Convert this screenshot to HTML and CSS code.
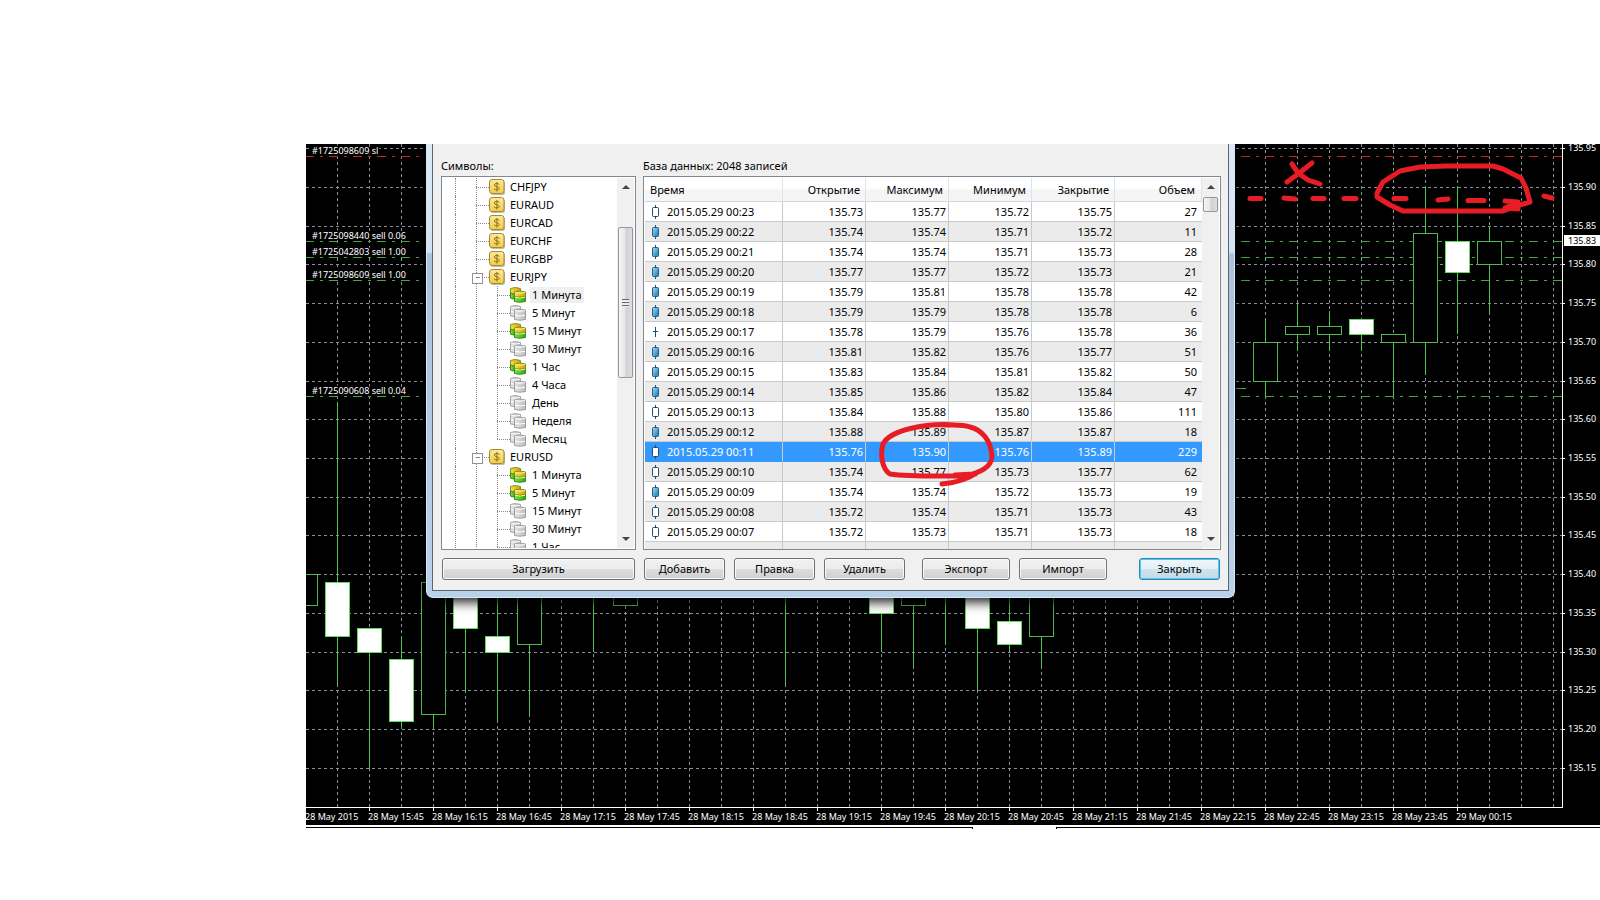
FILE: index.html
```html
<!DOCTYPE html>
<html lang="ru">
<head>
<meta charset="utf-8">
<title>История котировок</title>
<link rel="stylesheet" href="styles.css">
</head>
<body>
<svg class="defs" aria-hidden="true">
  <defs>
    <linearGradient id="gold" x1="0" y1="0" x2="0" y2="1"><stop offset="0" stop-color="#fbe9a0"/><stop offset="1" stop-color="#f3cc48"/></linearGradient>
    <linearGradient id="yel" x1="0" y1="0" x2="1" y2="0"><stop offset="0" stop-color="#f3e04a"/><stop offset="1" stop-color="#c9a400"/></linearGradient>
    <linearGradient id="grn" x1="0" y1="0" x2="1" y2="0"><stop offset="0" stop-color="#7be84a"/><stop offset="1" stop-color="#2fa80e"/></linearGradient>
    <linearGradient id="gry" x1="0" y1="0" x2="1" y2="0"><stop offset="0" stop-color="#e6e6e6"/><stop offset="1" stop-color="#bdbdbd"/></linearGradient>
    <linearGradient id="blu" x1="0" y1="0" x2="1" y2="1"><stop offset="0" stop-color="#a9dcf5"/><stop offset="1" stop-color="#1773b4"/></linearGradient>
    <symbol id="coin" viewBox="0 0 16 16">
      <rect x="1.5" y="2" width="14.500" height="14" rx="2.500" fill="#bbb"/>
      <rect x=".5" y=".5" width="14.500" height="14" rx="2.500" fill="url(#gold)" stroke="#a98a2a"/>
      <path d="M10.500 5.500C9.500 4 5.300 4 5.300 6S10.500 7.800 10.500 9.400 6 11.400 5 9.800M7.900 3v9.500" fill="none" stroke="#8f7312"/>
    </symbol>
    <symbol id="db-on" viewBox="0 0 16 16">
      <path d="M.5 1.500q4.500-2 10 0V11q-4.500 1.500-10 0z" fill="url(#yel)" stroke="#8c8a20"/>
      <path d="M.5 6q2 1 4.500 1v5q-3 0-4.500-1z" fill="url(#grn)" stroke="#3d8b20"/>
      <path d="M4.500 5q5-2 11 0V10h-11z" fill="url(#yel)" stroke="#8f8516"/>
      <path d="M4.500 10q5 1.500 11 0v4.500q-5 1.500-11 0z" fill="url(#grn)" stroke="#338a18"/>
      <path d="M5 5.500q5 1.500 10 0M5 10.300q5 1.500 10 0" fill="none" stroke="#f7f7a0"/>
    </symbol>
    <symbol id="db-off" viewBox="0 0 16 16">
      <path d="M.5 1.500q4.500-2 10 0V11q-4.500 1.500-10 0z" fill="url(#gry)" stroke="#a5a5a5"/>
      <path d="M1 6.200q2 1 4 1M1 2.500q4 1 9 0" fill="none" stroke="#fff"/>
      <path d="M4.500 5q5-2 11 0v9.500q-5 1.500-11 0z" fill="url(#gry)" stroke="#9d9d9d"/>
      <path d="M5 5.500q5 1.500 10 0M5 10.300q5 1.500 10 0" fill="none" stroke="#fff"/>
    </symbol>
    <symbol id="c-up" viewBox="0 0 8 14"><path d="M4.500 0v14" stroke="#1b4f6b"/><rect x="1.500" y="2.500" width="6" height="9" rx="1" fill="#fff" stroke="#1b4f6b"/></symbol>
    <symbol id="c-dn" viewBox="0 0 8 14"><path d="M4.500 0v14" stroke="#1b4f6b"/><rect x="1.500" y="2.500" width="6" height="9" rx="1" fill="url(#blu)" stroke="#1b5f8b"/></symbol>
    <symbol id="c-eq" viewBox="0 0 8 14"><path d="M4.500 2v10M2 6.500h5" stroke="#1b4f6b"/></symbol>
  </defs>
</svg>

<main class="stage">
  <svg class="chart" role="img" aria-label="EURJPY">
    <g transform="translate(-306 -144)">
      <path class="grid" d="M306 148.500H1562M306 187.500H1562M306 226.500H1562M306 264.500H1562M306 303.500H1562M306 342.500H1562M306 381.500H1562M306 419.500H1562M306 458.500H1562M306 497.500H1562M306 535.500H1562M306 574.500H1562M306 613.500H1562M306 652.500H1562M306 690.500H1562M306 729.500H1562M306 768.500H1562"/>
      <path class="grid" d="M337.500 144V807M369.500 144V807M401.500 144V807M433.500 144V807M465.500 144V807M497.500 144V807M529.500 144V807M561.500 144V807M593.500 144V807M625.500 144V807M657.500 144V807M689.500 144V807M721.500 144V807M753.500 144V807M785.500 144V807M817.500 144V807M849.500 144V807M881.500 144V807M913.500 144V807M945.500 144V807M977.500 144V807M1009.500 144V807M1041.500 144V807M1073.500 144V807M1105.500 144V807M1137.500 144V807M1169.500 144V807M1201.500 144V807M1233.500 144V807M1265.500 144V807M1297.500 144V807M1329.500 144V807M1361.500 144V807M1393.500 144V807M1425.500 144V807M1457.500 144V807M1489.500 144V807M1521.500 144V807M1553.500 144V807"/>
      <path class="order stop" d="M305 156.500H419M1241 156.500H1562"/>
      <path class="order" d="M305 241.500H419M305 257.500H419M305 280.500H419M305 396.500H419M1241 241.500H1562M1241 257.500H1562M1241 280.500H1562M1241 396.500H1562"/>
      <path class="wick" d="M1236 388.500H1246"/>
      <path class="wick" d="M337.500 402V684M369.500 628V770M401.500 636V729M433.500 714V729M465.500 590V692M497.500 590V722M529.500 644V716M593.500 590V652M785.500 590V684M881.500 590V652M913.500 605V668M945.500 590V644M977.500 590V691M1009.500 590V652M1041.500 636V668M1265.500 318V397M1297.500 303V350M1329.500 311V350M1361.500 319V350M1393.500 334V397M1425.500 187V374M1457.500 187V334M1489.500 227V312"/>
      <g class="bear">
        <path d="M293.500 574.500h24v31h-24zM421.500 582.500h24v132h-24zM517.500 582.500h24v62h-24zM613.500 582.500h24v23h-24zM901.500 582.500h24v23h-24zM1029.500 582.500h24v54h-24zM1253.500 342.500h24v39h-24zM1285.500 326.500h24v8h-24zM1317.500 326.500h24v8h-24zM1381.500 334.500h24v8h-24zM1413.500 233.500h24v109h-24zM1477.500 241.500h24v23h-24z"/>
      </g>
      <g class="bull">
        <path d="M325.500 582.500h24v54h-24zM357.500 628.500h24v24h-24zM389.500 659.500h24v62h-24zM453.500 582.500h24v46h-24zM485.500 636.500h24v16h-24zM869.500 582.500h24v31h-24zM965.500 582.500h24v46h-24zM997.500 621.500h24v23h-24zM1349.500 319.500h24v15h-24zM1445.500 241.500h24v31h-24z"/>
      </g>
      <path class="axis" d="M306 807.500H1562.500V144M369.500 807v4M433.500 807v4M497.500 807v4M561.500 807v4M625.500 807v4M689.500 807v4M753.500 807v4M817.500 807v4M881.500 807v4M945.500 807v4M1009.500 807v4M1073.500 807v4M1137.500 807v4M1201.500 807v4M1265.500 807v4M1329.500 807v4M1393.500 807v4M1457.500 807v4M1562 148.500h3M1562 187.500h3M1562 226.500h3M1562 264.500h3M1562 303.500h3M1562 342.500h3M1562 381.500h3M1562 419.500h3M1562 458.500h3M1562 497.500h3M1562 535.500h3M1562 574.500h3M1562 613.500h3M1562 652.500h3M1562 690.500h3M1562 729.500h3M1562 768.500h3"/>
      <g class="label boxed">
        <text x="312" y="154">#1725098609 sl</text>
        <text x="312" y="239">#1725098440 sell 0.06</text>
        <text x="312" y="255">#1725042803 sell 1.00</text>
        <text x="312" y="278">#1725098609 sell 1.00</text>
        <text x="312" y="394">#1725090608 sell 0.04</text>
      </g>
      <g class="label">
        <text x="1568" y="151">135.95</text><text x="1568" y="190">135.90</text><text x="1568" y="229">135.85</text><text x="1568" y="267">135.80</text><text x="1568" y="306">135.75</text><text x="1568" y="345">135.70</text><text x="1568" y="384">135.65</text><text x="1568" y="422">135.60</text><text x="1568" y="461">135.55</text><text x="1568" y="500">135.50</text><text x="1568" y="538">135.45</text><text x="1568" y="577">135.40</text><text x="1568" y="616">135.35</text><text x="1568" y="655">135.30</text><text x="1568" y="693">135.25</text><text x="1568" y="732">135.20</text><text x="1568" y="771">135.15</text>
        <rect x="1564" y="235" width="36" height="11" fill="#fff"/>
        <text class="current" x="1568" y="244">135.83</text>
      </g>
      <g class="label">
        <text x="305" y="820">28 May 2015</text><text x="368" y="820">28 May 15:45</text><text x="432" y="820">28 May 16:15</text><text x="496" y="820">28 May 16:45</text><text x="560" y="820">28 May 17:15</text><text x="624" y="820">28 May 17:45</text><text x="688" y="820">28 May 18:15</text><text x="752" y="820">28 May 18:45</text><text x="816" y="820">28 May 19:15</text><text x="880" y="820">28 May 19:45</text><text x="944" y="820">28 May 20:15</text><text x="1008" y="820">28 May 20:45</text><text x="1072" y="820">28 May 21:15</text><text x="1136" y="820">28 May 21:45</text><text x="1200" y="820">28 May 22:15</text><text x="1264" y="820">28 May 22:45</text><text x="1328" y="820">28 May 23:15</text><text x="1392" y="820">28 May 23:45</text><text x="1456" y="820">29 May 00:15</text>
      </g>
    </g>
  </svg>
  <div class="tabs"><span class="tab-edge first"></span><span class="tab-gap"></span><span class="tab-edge last"></span></div>

  <section class="dialog" role="dialog" aria-label="База данных">
    <div class="client">
      <div class="panes">
        <div class="pane">
          <h2 class="caption">Символы:</h2>
          <div class="box tree-box">
            <ul class="tree">
              <li class="sym"><svg class="icon"><use href="#coin"/></svg><span>CHFJPY</span></li>
              <li class="sym"><svg class="icon"><use href="#coin"/></svg><span>EURAUD</span></li>
              <li class="sym"><svg class="icon"><use href="#coin"/></svg><span>EURCAD</span></li>
              <li class="sym"><svg class="icon"><use href="#coin"/></svg><span>EURCHF</span></li>
              <li class="sym"><svg class="icon"><use href="#coin"/></svg><span>EURGBP</span></li>
              <li class="sym open"><svg class="icon"><use href="#coin"/></svg><span>EURJPY</span></li>
              <li>
                <ul class="frames">
                  <li><svg class="icon"><use href="#db-on"/></svg><span class="picked">1 Минута</span></li>
                  <li><svg class="icon"><use href="#db-off"/></svg><span>5 Минут</span></li>
                  <li><svg class="icon"><use href="#db-on"/></svg><span>15 Минут</span></li>
                  <li><svg class="icon"><use href="#db-off"/></svg><span>30 Минут</span></li>
                  <li><svg class="icon"><use href="#db-on"/></svg><span>1 Час</span></li>
                  <li><svg class="icon"><use href="#db-off"/></svg><span>4 Часа</span></li>
                  <li><svg class="icon"><use href="#db-off"/></svg><span>День</span></li>
                  <li><svg class="icon"><use href="#db-off"/></svg><span>Неделя</span></li>
                  <li><svg class="icon"><use href="#db-off"/></svg><span>Месяц</span></li>
                </ul>
              </li>
              <li class="sym open"><svg class="icon"><use href="#coin"/></svg><span>EURUSD</span></li>
              <li>
                <ul class="frames more">
                  <li><svg class="icon"><use href="#db-on"/></svg><span>1 Минута</span></li>
                  <li><svg class="icon"><use href="#db-on"/></svg><span>5 Минут</span></li>
                  <li><svg class="icon"><use href="#db-off"/></svg><span>15 Минут</span></li>
                  <li><svg class="icon"><use href="#db-off"/></svg><span>30 Минут</span></li>
                  <li><svg class="icon"><use href="#db-off"/></svg><span>1 Час</span></li>
                </ul>
              </li>
            </ul>
            <div class="scroll"><i class="arrow up"></i><div class="track tree-track"><div class="thumb"><i class="grip"></i></div></div><i class="arrow down"></i></div>
          </div>
        </div>
        <div class="pane wide">
          <h2 class="caption">База данных: 2048 записей</h2>
          <div class="box table-box">
            <table class="quotes">
              <thead><tr><th class="time">Время</th><th>Открытие</th><th>Максимум</th><th>Минимум</th><th>Закрытие</th><th>Объем</th></tr></thead>
              <tbody>
                <tr><td><svg class="bar"><use href="#c-up"/></svg>2015.05.29 00:23</td><td>135.73</td><td>135.77</td><td>135.72</td><td>135.75</td><td>27</td></tr>
                <tr><td><svg class="bar"><use href="#c-dn"/></svg>2015.05.29 00:22</td><td>135.74</td><td>135.74</td><td>135.71</td><td>135.72</td><td>11</td></tr>
                <tr><td><svg class="bar"><use href="#c-dn"/></svg>2015.05.29 00:21</td><td>135.74</td><td>135.74</td><td>135.71</td><td>135.73</td><td>28</td></tr>
                <tr><td><svg class="bar"><use href="#c-dn"/></svg>2015.05.29 00:20</td><td>135.77</td><td>135.77</td><td>135.72</td><td>135.73</td><td>21</td></tr>
                <tr><td><svg class="bar"><use href="#c-dn"/></svg>2015.05.29 00:19</td><td>135.79</td><td>135.81</td><td>135.78</td><td>135.78</td><td>42</td></tr>
                <tr><td><svg class="bar"><use href="#c-dn"/></svg>2015.05.29 00:18</td><td>135.79</td><td>135.79</td><td>135.78</td><td>135.78</td><td>6</td></tr>
                <tr><td><svg class="bar"><use href="#c-eq"/></svg>2015.05.29 00:17</td><td>135.78</td><td>135.79</td><td>135.76</td><td>135.78</td><td>36</td></tr>
                <tr><td><svg class="bar"><use href="#c-dn"/></svg>2015.05.29 00:16</td><td>135.81</td><td>135.82</td><td>135.76</td><td>135.77</td><td>51</td></tr>
                <tr><td><svg class="bar"><use href="#c-dn"/></svg>2015.05.29 00:15</td><td>135.83</td><td>135.84</td><td>135.81</td><td>135.82</td><td>50</td></tr>
                <tr><td><svg class="bar"><use href="#c-dn"/></svg>2015.05.29 00:14</td><td>135.85</td><td>135.86</td><td>135.82</td><td>135.84</td><td>47</td></tr>
                <tr><td><svg class="bar"><use href="#c-up"/></svg>2015.05.29 00:13</td><td>135.84</td><td>135.88</td><td>135.80</td><td>135.86</td><td>111</td></tr>
                <tr><td><svg class="bar"><use href="#c-dn"/></svg>2015.05.29 00:12</td><td>135.88</td><td>135.89</td><td>135.87</td><td>135.87</td><td>18</td></tr>
                <tr class="selected"><td><svg class="bar"><use href="#c-up"/></svg>2015.05.29 00:11</td><td>135.76</td><td>135.90</td><td>135.76</td><td>135.89</td><td>229</td></tr>
                <tr><td><svg class="bar"><use href="#c-up"/></svg>2015.05.29 00:10</td><td>135.74</td><td>135.77</td><td>135.73</td><td>135.77</td><td>62</td></tr>
                <tr><td><svg class="bar"><use href="#c-dn"/></svg>2015.05.29 00:09</td><td>135.74</td><td>135.74</td><td>135.72</td><td>135.73</td><td>19</td></tr>
                <tr><td><svg class="bar"><use href="#c-up"/></svg>2015.05.29 00:08</td><td>135.72</td><td>135.74</td><td>135.71</td><td>135.73</td><td>43</td></tr>
                <tr><td><svg class="bar"><use href="#c-up"/></svg>2015.05.29 00:07</td><td>135.72</td><td>135.73</td><td>135.71</td><td>135.73</td><td>18</td></tr>
                <tr><td></td><td></td><td></td><td></td><td></td><td></td></tr>
              </tbody>
            </table>
            <div class="scroll"><i class="arrow up"></i><div class="track"><div class="thumb small"></div></div><i class="arrow down"></i></div>
          </div>
        </div>
      </div>
      <div class="actions">
        <button class="btn load">Загрузить</button>
        <div class="group"><button class="btn">Добавить</button><button class="btn">Правка</button><button class="btn">Удалить</button></div>
        <div class="group io"><button class="btn">Экспорт</button><button class="btn">Импорт</button></div>
        <button class="btn close">Закрыть</button>
      </div>
    </div>
  </section>

  <svg class="marks" aria-hidden="true">
    <g transform="translate(-306 -144)">
      <path d="M955 425C925 423 890 430 883 444C880 455 882 469 890 474C910 477 945 476 963 476C982 473 991 466 992 457C991 440 982 430 970 427C962 424 956 425 945 425M942 484C955 483 968 479 978 472M955 475L975 474"/>
      <path d="M1377 193L1383 182L1400 171L1420 167L1446 166H1493L1503 169L1521 178L1526 188L1530 202L1517 206L1503 211H1403L1390 205L1377 197ZM1505 201L1518 202L1505 208L1518 209"/>
      <path d="M1292 164L1298 173L1308 180L1320 184M1312 163L1298 174L1287 182"/>
      <path d="M1250 198.500H1261M1284 198L1295 199M1313 198.500H1324M1344 198.500H1356M1394 198.500H1406M1438 200L1448 199M1468 200.500H1484M1544 196L1552 198"/>
    </g>
  </svg>
</main>
</body>
</html>
```

FILE: styles.css
```css
* { box-sizing: border-box; }
body { margin: 0; padding: 144px 0 0 306px; background: #fff; font: 11px/18px "Noto Sans", sans-serif; color: #000; overflow-x: hidden; }
ul { list-style: none; margin: 0; padding: 0; }
.defs { position: absolute; width: 0; height: 0; }
.stage { position: relative; overflow: hidden; }
.chart { display: block; width: 100%; height: 681px; background: #000; }
.chart path { fill: none; shape-rendering: crispEdges; }
.grid { stroke: #8a8f99; stroke-dasharray: 3 3; }
.order { stroke: #46a546; stroke-dasharray: 9 6 3 6; }
.chart .stop { stroke: #c4261e; }
.wick { stroke: #4fc04f; }
.chart .bear path { fill: #000; stroke: #4fb84f; }
.chart .bull path { fill: #fff; stroke: #5fdc5f; }
.axis { stroke: #fff; }
.label { font-size: 9px; fill: #fff; }
.boxed { stroke: #000; stroke-width: 3px; paint-order: stroke; }
.label .current { fill: #000; }

.tabs { display: flex; height: 5px; padding-top: 2px; }
.tab-edge { border-top: 1px solid #000; }
.first { flex: 667; border-right: 1px solid #000; height: 2px; }
.tab-gap { flex: 83; }
.last { flex: 544; border-left: 1px solid #000; height: 2px; }

.dialog { position: absolute; left: 120px; top: 0; width: 809px; padding: 0 5px 6px; border: 1px solid #d6e8fa; border-top: 0; border-radius: 0 0 7px 7px; background: linear-gradient(#dce9f7 0, #d3e2f2 108px, #a9c3dd 110px, #b9d1ea 100%); box-shadow: 0 4px 12px rgba(0, 0, 0, .9); }
.client { background: #f0f0f0; border: 1px solid #5b6675; border-top: 0; padding: 13px 7px 10px 8px; }
.panes { display: flex; gap: 7px; }
.pane { width: 195px; }
.wide { flex: 1; width: auto; }
.caption { margin: 0 0 1px; font-size: 11px; line-height: 18px; font-weight: 400; }
.box { display: flex; height: 374px; border: 1px solid #828790; background: #fff; overflow: hidden; padding: 1px; }

.tree { flex: 1; padding-left: 12px; overflow: hidden; }
.tree > li { border-left: 1px dotted #888; padding-left: 20px; background: repeating-linear-gradient(#888 0 1px, transparent 1px 2px) 20px 0 / 1px 100% no-repeat; }
.sym, .frames li { position: relative; display: flex; align-items: center; height: 18px; white-space: nowrap; }
.sym::before, .frames li::before { content: ""; width: 13px; border-top: 1px dotted #888; }
.sym { gap: 5px; }
.sym::before { margin-right: -5px; }
.open::after { content: "−"; position: absolute; left: 16px; top: 5px; width: 9px; height: 9px; border: 1px solid #919191; background: #fff; color: #24478f; font-size: 9px; line-height: 7px; text-align: center; }
.frames { margin-left: 21px; background: repeating-linear-gradient(#888 0 1px, transparent 1px 2px) 0 0 / 1px 154px no-repeat; }
.more { background-size: 1px 100%; }
.frames li { gap: 4px; }
.frames li::before { margin-right: -4px; }
.frames span { padding: 0 2px; line-height: 16px; }
.frames .picked { background: #f0f0f0; }
.icon { width: 16px; height: 16px; flex: none; }

.scroll { width: 17px; flex: none; display: flex; flex-direction: column; align-items: center; background: #f0f0f0; }
.arrow { border: 4px solid transparent; width: 0; height: 0; }
.up { border-top: 0; border-bottom-color: #444; margin: 7px 0 8px; }
.down { border-bottom: 0; border-top-color: #444; margin: 7px 0 7px; }
.track { flex: 1; width: 100%; padding: 0 1px; }
.tree-track { padding-top: 30px; }
.thumb { height: 151px; border: 1px solid #979797; border-radius: 2px; background: linear-gradient(90deg, #f5f5f5, #e6e6e8 45%, #cfd0d3 55%, #dedee0); display: flex; align-items: center; justify-content: center; }
.small { height: 15px; }
.grip { width: 7px; height: 8px; background: repeating-linear-gradient(#666 0 1px, #eee 1px 3px); }

.quotes { flex: 1; border-collapse: separate; border-spacing: 0; table-layout: fixed; width: 0; height: 0; }
.quotes th { height: 24px; width: 83px; padding: 0 5px 0 0; font-weight: 400; text-align: right; border-right: 1px solid #dfe2e6; border-bottom: 1px solid #d5d5d5; background: linear-gradient(#fff 45%, #f3f4f6 55%, #f5f6f8); }
.quotes .time { width: 138px; text-align: left; padding-left: 5px; }
.quotes th:last-child { width: auto; padding-right: 6px; }
.quotes td { height: 20px; line-height: 19px; padding: 0 2px 0 0; text-align: right; border-right: 1px solid #c9c9c9; border-bottom: 1px solid #c9c9c9; white-space: nowrap; }
.quotes td:first-child { text-align: left; padding-left: 6px; }
.quotes td:last-child { border-right: 0; padding-right: 5px; }
.quotes tr:nth-child(even) td { background: #ebebeb; }
.quotes .selected td { background: #3399ff; color: #fff; border-bottom-color: #3399ff; }
.bar { width: 8px; height: 14px; vertical-align: middle; margin-right: 8px; margin-top: -2px; }

.actions { display: flex; margin-top: 8px; padding: 0 1px; }
.group { display: flex; gap: 9px; margin-left: 9px; }
.io { margin-left: 17px; }
.btn { width: 81px; height: 22px; padding: 0 0 1px; border: 1px solid #707070; border-radius: 3px; font: 11px/18px "Noto Sans", sans-serif; color: #000; background: linear-gradient(#f2f2f2 0, #ebebeb 48%, #dddddd 52%, #cfcfcf 100%); box-shadow: inset 0 0 0 1px #fafafa; }
.load { width: 193px; }
.io .btn { width: 88px; }
.close { margin-left: auto; border-color: #3c7fb1; background: linear-gradient(#eef6fa 0, #e2f0f7 48%, #cfe2ea 52%, #c2dbe6 100%); box-shadow: inset 0 0 0 1px #48cdf2; }

.marks { position: absolute; left: 0; top: 0; width: 100%; height: 400px; pointer-events: none; }
.marks path { fill: none; stroke: #e81c24; stroke-width: 5px; stroke-linecap: round; stroke-linejoin: round; }
```
